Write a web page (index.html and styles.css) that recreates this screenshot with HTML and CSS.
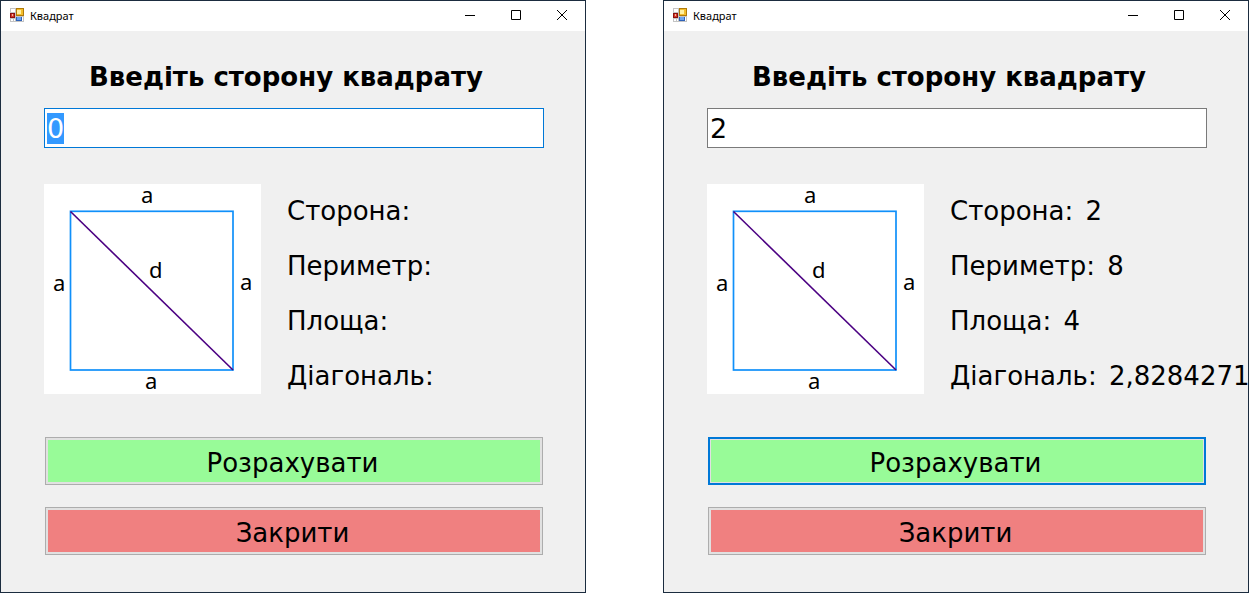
FILE: index.html
```html
<!DOCTYPE html>
<html lang="uk">
<head>
<meta charset="utf-8">
<title>Квадрат</title>
<link rel="stylesheet" href="styles.css">
</head>
<body>
<svg class="defs" aria-hidden="true">
  <symbol id="form-icon" viewBox="0 0 14 14">
    <path fill="#c4c4c4" d="M0 0h14v14H0z"/>
    <path fill="#fff" d="M1 1h4v3H1zM1 11h2v2H1zM4 11h1v2H4zM12 9h1v4h-1z"/>
    <path fill="#b07a08" d="M6 0h8v8H6z"/>
    <path fill="#f3bd2c" d="M7 1h6v6H7z"/>
    <path fill="#fff0a0" d="M7 2h4v4H7z"/>
    <path fill="#8c1010" d="M0 5h5v5H0z"/>
    <path fill="#d43a28" d="M1 6h3v3H1z"/>
    <path fill="#f3b0a0" d="M2 6h1v2H2z"/>
    <path fill="#2f62b8" d="M6 9h6v4H6z"/>
    <path fill="#6da4ee" d="M7 9h4v3H7z"/>
  </symbol>
  <symbol id="min" viewBox="0 0 10 10"><path fill="#000" d="M0 5h10v1H0z"/></symbol>
  <symbol id="max" viewBox="0 0 10 10"><path fill="none" stroke="#000" d="M.5.5h9v9h-9z"/></symbol>
  <symbol id="close" viewBox="0 0 10 10"><path stroke="#000" d="M0 0l10 10M10 0L0 10"/></symbol>
</svg>
<main class="desktop">
  <section class="window">
    <header class="titlebar">
      <svg class="app-icon"><use href="#form-icon"/></svg>
      <span class="caption">Квадрат</span>
      <button class="control" aria-label="Згорнути"><svg><use href="#min"/></svg></button>
      <button class="control" aria-label="Розгорнути"><svg><use href="#max"/></svg></button>
      <button class="control" aria-label="Закрити вікно"><svg><use href="#close"/></svg></button>
    </header>
    <form class="content">
      <label class="prompt" for="side-a">Введіть сторону квадрату</label>
      <input class="side" id="side-a" type="text" value="0" autocomplete="off">
      <div class="details">
        <svg class="picture" viewBox="0 0 217 210" role="img" aria-label="Квадрат зі стороною a та діагоналлю d">
          <rect class="edge" x="26.5" y="27.3" width="162.5" height="158.7"/>
          <path class="diagonal" d="M26.5 27.5L189 186"/>
          <text x="97" y="19">a</text>
          <text x="9" y="107">a</text>
          <text x="196" y="106">a</text>
          <text x="101" y="205">a</text>
          <text x="105" y="94">d</text>
        </svg>
        <div class="results">
          <p>Сторона:</p>
          <p>Периметр:</p>
          <p>Площа:</p>
          <p>Діагональ:</p>
        </div>
      </div>
      <div class="actions">
        <button class="action calculate" type="button">Розрахувати</button>
        <button class="action exit" type="button">Закрити</button>
      </div>
    </form>
  </section>
  <section class="window">
    <header class="titlebar">
      <svg class="app-icon"><use href="#form-icon"/></svg>
      <span class="caption">Квадрат</span>
      <button class="control" aria-label="Згорнути"><svg><use href="#min"/></svg></button>
      <button class="control" aria-label="Розгорнути"><svg><use href="#max"/></svg></button>
      <button class="control" aria-label="Закрити вікно"><svg><use href="#close"/></svg></button>
    </header>
    <form class="content">
      <label class="prompt" for="side-b">Введіть сторону квадрату</label>
      <input class="side" id="side-b" type="text" value="2" autocomplete="off">
      <div class="details">
        <svg class="picture" viewBox="0 0 217 210" role="img" aria-label="Квадрат зі стороною a та діагоналлю d">
          <rect class="edge" x="26.5" y="27.3" width="162.5" height="158.7"/>
          <path class="diagonal" d="M26.5 27.5L189 186"/>
          <text x="97" y="19">a</text>
          <text x="9" y="107">a</text>
          <text x="196" y="106">a</text>
          <text x="101" y="205">a</text>
          <text x="105" y="94">d</text>
        </svg>
        <div class="results">
          <p>Сторона: <output>2</output></p>
          <p>Периметр: <output>8</output></p>
          <p>Площа: <output>4</output></p>
          <p>Діагональ: <output>2,8284271</output></p>
        </div>
      </div>
      <div class="actions">
        <button class="action calculate default" type="button">Розрахувати</button>
        <button class="action exit" type="button">Закрити</button>
      </div>
    </form>
  </section>
</main>
<script src="script.js"></script>
</body>
</html>
```
FILE: styles.css
```css
* { box-sizing: border-box; }
body {
  margin: 0;
  background: #fff;
  color: #000;
  font-family: Verdana, "DejaVu Sans", sans-serif;
  font-size: 26px;
}
.defs { position: absolute; width: 0; height: 0; }
.desktop {
  display: flex;
  gap: 77px;
  min-height: 100vh;
  padding-right: 1px;
}
.window {
  flex: 1;
  min-width: 0;
  overflow: hidden;
  border: 1px solid #1b2c3f;
  background: #f0f0f0;
}
.titlebar {
  display: flex;
  align-items: center;
  height: 30px;
  padding: 0 0 2px 9px;
  background: #fff;
}
.app-icon { width: 14px; height: 14px; margin-right: 6px; }
.caption {
  flex: 1;
  font-family: "Segoe UI", "Noto Sans", sans-serif;
  font-size: 11px;
}
.control {
  display: flex;
  align-items: center;
  justify-content: center;
  width: 46px;
  height: 28px;
  padding: 0;
  border: 0;
  background: none;
}
.control svg { width: 10px; height: 10px; }
.content { padding: 26px 41px 37px 43px; }
.prompt {
  display: block;
  padding-right: 16px;
  line-height: 40px;
  font-weight: bold;
  text-align: center;
  white-space: nowrap;
}
.side {
  display: block;
  width: 100%;
  height: 40px;
  margin-top: 11px;
  padding: 0 2px;
  border: 1px solid #7a7a7a;
  border-radius: 0;
  outline: 0;
  background: #fff;
  color: #000;
  font: inherit;
  font-size: 27px;
}
.side:focus { border-color: #0078d7; }
.side::selection { background: #3399ff; color: #fff; }
.details { display: flex; gap: 26px; margin-top: 36px; }
.picture {
  flex: none;
  width: 217px;
  height: 210px;
  background: #fff;
  font-family: "Noto Sans", sans-serif;
  font-size: 22px;
}
.edge { fill: none; stroke: #1090fa; stroke-width: 1.7; }
.diagonal { stroke: #4b0082; stroke-width: 1.6; }
.results { min-width: 0; height: 210px; }
.results p { margin: 0; line-height: 55px; white-space: nowrap; }
.results output { margin-left: 4px; }
.actions {
  display: grid;
  gap: 22px;
  margin-top: 43px;
  padding: 0 1px;
}
.action {
  height: 48px;
  padding: 3px 3px 0 0;
  border: 1px solid #adadad;
  box-shadow: inset 0 0 0 2px #e1e1e1;
  color: #000;
  font: inherit;
}
.calculate { background: #98fb98; }
.exit { background: #f08080; }
.default { border: 2px solid #0078d7; box-shadow: inset 0 0 0 1px #e1e1e1; }
```
FILE: script.js
```js
const side = document.getElementById("side-a");
side.focus();
side.select();
```
